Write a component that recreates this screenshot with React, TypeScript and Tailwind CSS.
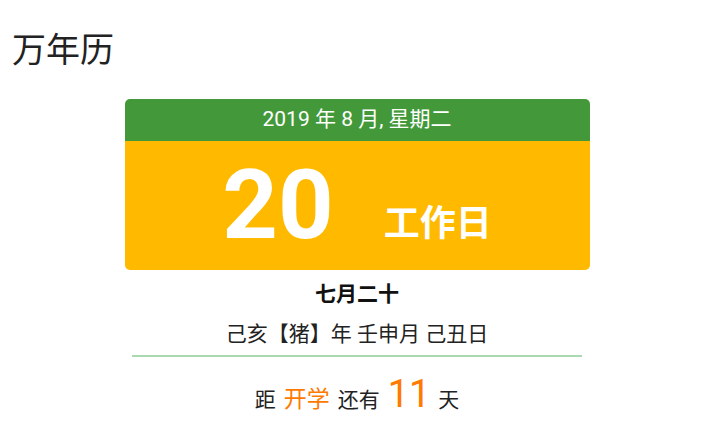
export default function App() {
  return (
    <div className="min-h-[435px] bg-white font-['Roboto','Noto_Sans_CJK_SC',sans-serif] text-[#222]">
      <h1 className="px-3 pt-[28px] text-[34px] leading-[44px] text-[#222]">万年历</h1>

      <div className="mx-auto mt-[27px] w-[465px]">
        <div className="overflow-hidden rounded-[5px]">
          <div className="flex h-[42px] items-center justify-center bg-[#43993a] text-[21px] text-white">
            2019 年 8 月, 星期二
          </div>
          <div className="flex h-[129px] items-center justify-center bg-[#ffba00] text-white">
            <span className="mr-[50px] text-[97px] font-bold leading-none">20</span>
            <span className="mt-[36px] text-[36px] font-bold leading-none">工作日</span>
          </div>
        </div>

        <div className="mt-[12px] text-center text-[21px] font-bold leading-6 text-[#111]">七月二十</div>
        <div className="mt-[16px] text-center text-[21px] leading-6 text-[#222]">己亥【猪】年 壬申月 己丑日</div>
        <div className="mx-auto mt-[9px] h-[2px] w-[450px] bg-[#a9d8b1]" />

        <div className="mt-[18px] flex items-baseline justify-center gap-[8px] text-[21px] text-[#222]">
          <span>距</span>
          <span className="text-[23px] text-[#ff7a00]">开学</span>
          <span>还有</span>
          <span className="text-[38px] leading-none text-[#ff7a00]">11</span>
          <span>天</span>
        </div>
      </div>
    </div>
  );
}
